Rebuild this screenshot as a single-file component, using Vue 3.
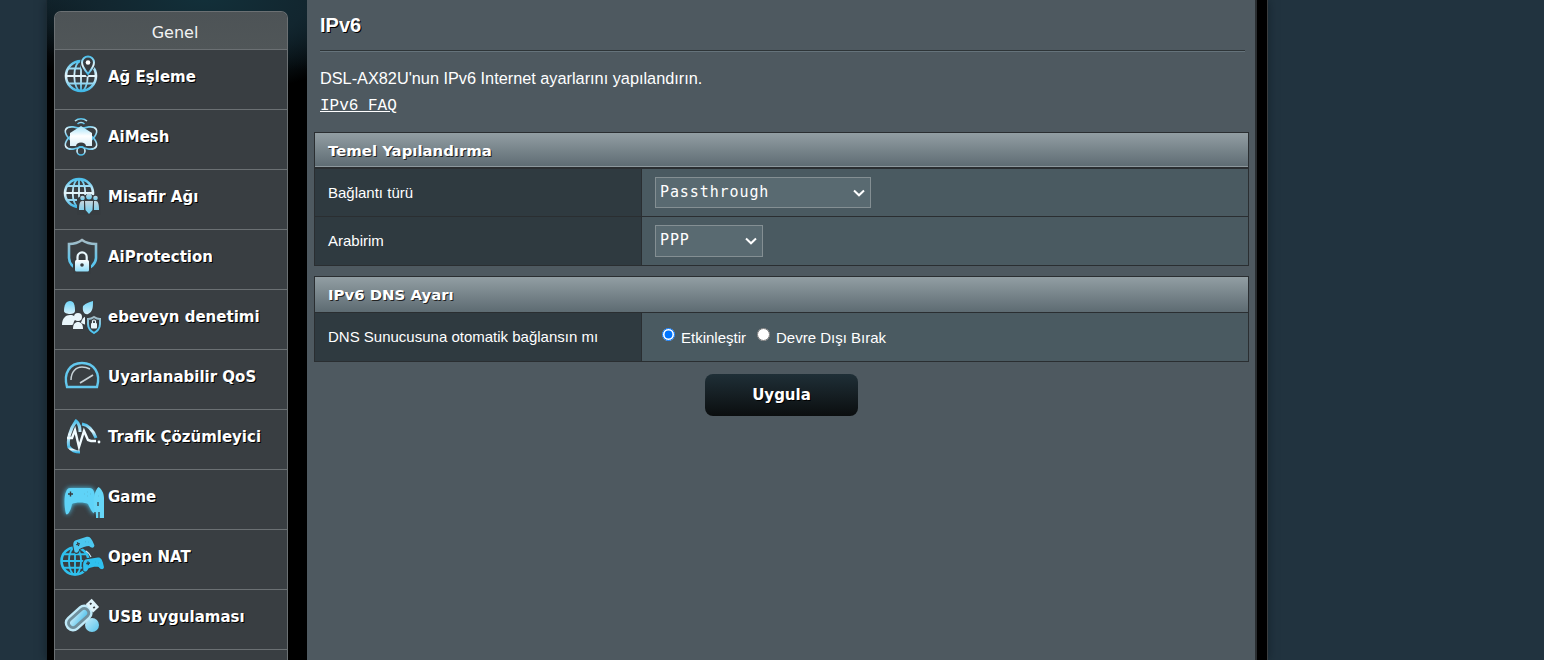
<script setup>
const globe = (cx, cy, r, stroke = 'url(#gv)') => `
  <g fill="none" stroke="${stroke}" stroke-width="1.800">
    <circle cx="${cx}" cy="${cy}" r="${r}" stroke-width="2.600"/>
    <ellipse cx="${cx}" cy="${cy}" rx="${r * 0.45}" ry="${r}"/>
    <path d="M${cx} ${cy - r}V${cy + r}M${cx - r} ${cy}H${cx + r}M${cx - r * 0.85} ${cy - r * 0.5}H${cx + r * 0.85}M${cx - r * 0.85} ${cy + r * 0.5}H${cx + r * 0.85}"/>
  </g>`

const pad = (x, y, s, rot, fill) => `
  <g transform="translate(${x} ${y}) rotate(${rot}) scale(${s})" >
    <path fill="${fill}" stroke="#373c40" stroke-width="2" paint-order="stroke" d="M-6 -6H6C9 -6 10 -3 10.500 0L11 5C10 8 7 7 5.500 4C2 3-2 3-5.500 4C-7 7-10 8-11 5L-10.500 0C-10 -3-9 -6-6 -6Z"/>
    <path stroke="#373c40" stroke-width="1.400" fill="none" d="M-7 -1.500H-3M-5 -3.500V.5M3 -1.500H3.100M6 0H6.100"/>
  </g>`

const menu = [
  {
    label: 'Ağ Eşleme',
    icon: globe(21, 22, 15) + `
      <path fill="#373c40" d="M27 23C22 16 20 13 20 9A8 8 0 0 1 36 9C36 13 32 17 27 23Z"/>
      <path fill="none" stroke="url(#gv)" stroke-width="2" d="M28 20C24 15 22 12 22 8.500A6 6 0 0 1 34 8.500C34 12 32 15 28 20Z"/>
      <circle cx="28" cy="8.500" r="2.300" fill="#fff"/>`
  },
  {
    label: 'AiMesh',
    icon: `
      <g fill="none" stroke="url(#gv)" stroke-width="1.600">
        <path d="M15 7A9 9 0 0 1 27 7M17.500 10A5 5 0 0 1 24.500 10"/>
        <ellipse cx="21" cy="24" rx="17.500" ry="8" transform="rotate(30 21 24)"/>
        <ellipse cx="21" cy="24" rx="17.500" ry="8" transform="rotate(-30 21 24)"/>
        <circle cx="21" cy="37" r="4"/>
      </g>
      <path fill="url(#gw)" d="M21 12L32 19V32H10V19Z"/>
      <path fill="#373c40" d="M16 32A5 3.500 0 0 1 26 32Z"/>`
  },
  {
    label: 'Misafir Ağı',
    icon: globe(19, 19, 14) + `
      <path fill="#373c40" d="M17 25C20 20 36 19 41 25V41H17Z"/>
      <g fill="url(#gp)">
        <circle cx="22.500" cy="24" r="2.300"/><circle cx="29" cy="22.500" r="2.900"/><circle cx="35.500" cy="24" r="2.300"/>
        <path d="M19 36C19 30 20 27 22 27H24V36ZM25 27H33L32.500 36L29 40L25.500 36ZM34 27H36C38 27 39 30 39 36H34Z"/>
      </g>`
  },
  {
    label: 'AiProtection',
    icon: `
      <path fill="none" stroke="url(#gs)" stroke-width="2.600" d="M22 6C26 9 32 10 36 10V24C36 31 29 35 22 38C15 35 9 31 9 24V10C13 10 18 9 22 6Z"/>
      <path fill="#373c40" d="M13 24H31V40H13Z"/>
      <path fill="none" stroke="#e9f8fe" stroke-width="2.200" d="M17.500 27V23A4.600 4.600 0 0 1 26.700 23V27"/>
      <rect x="15" y="26" width="14" height="11.500" rx="1.500" fill="url(#gl)"/>
      <circle cx="22" cy="31" r="1.800" fill="#373c40"/>`
  },
  {
    label: 'ebeveyn denetimi',
    icon: `
      <g fill="url(#gp2)">
        <path d="M4 17C4 11 6 7 10 7S15 11 15 17C15 19 13 20 10 20S4 19 4 17Z"/>
        <path d="M23 12C26 9 30 8 33 7C33 13 33 18 28 20C25 21 22 18 23 12Z"/>
      </g>
      <g fill="#e9f6fb">
        <path d="M2 31C2 24 6 21 10 21C14 21 16 23 15 26C13 28 14 31 12 31H4C3 31 2 31 2 31Z"/>
        <circle cx="18" cy="23" r="4"/>
        <path d="M13 35C13 30 15 28 18 28S23 30 23 35Z"/>
        <path d="M21 29C22 25 24 22 28 22L30 23C27 26 26 31 26 31Z"/>
      </g>
      <path fill="#373c40" d="M34 20C31 22 28 22 25 22V30C25 36 29 38 34 41C39 38 42 36 42 30V22C39 22 37 22 34 20Z"/>
      <path fill="none" stroke="url(#gs)" stroke-width="2" d="M34 23C32 24.500 30 25 28 25V30C28 35 31 37 34 39C37 37 40 35 40 30V25C38 25 36 24.500 34 23Z"/>
      <rect x="31" y="29" width="6" height="5.500" rx="1" fill="#e9f6fb"/>
      <path fill="none" stroke="#e9f6fb" stroke-width="1.200" d="M32.500 29V27.500A1.500 1.500 0 0 1 35.500 27.500V29"/>`
  },
  {
    label: 'Uyarlanabilir QoS',
    icon: `
      <path fill="none" stroke="#63c8ee" stroke-width="2.400" d="M7 33C3 19 10 9 22 9S41 19 37 33Z"/>
      <path fill="none" stroke="#c8d3d8" stroke-width="1.500" d="M11 26C11 18 16 13 22 13C25 13 28 14 30 15"/>
      <path stroke="#c8d3d8" stroke-width="1.700" d="M20 29L33 21"/>`
  },
  {
    label: 'Trafik Çözümleyici',
    icon: `
      <g fill="none" stroke="url(#gv)" stroke-width="3">
        <path d="M9 34C7 26 10 15 16 7C20 10 20 14 20 18"/>
        <path d="M22 10C28 11 33 16 36 24"/>
        <path d="M9 33C12 37 16 38 20 38"/>
      </g>
      <path fill="none" stroke="#f1fbff" stroke-width="2.400" d="M7 24H12L15 16L19 33L24 17L28 26L31 27H36"/>
      <circle cx="39" cy="28" r="1.400" fill="#f1fbff"/>`
  },
  {
    label: 'Game',
    icon: `
      <g filter="url(#glow)">
        <path fill="#4fcdf5" d="M10 14H30C33 14 35 18 35 24L36 39C33 41 31 36 28 30C25 28 15 28 12 30C11 36 8 42 6 40C4 33 4 21 6 18C7 15 8 14 10 14Z"/>
      </g>
      <path fill="#5fd3f7" d="M10 14H30C33 14 35 18 35 24L36 39C33 41 31 36 28 30C25 28 15 28 12 30C11 36 8 42 6 40C4 33 4 21 6 18C7 15 8 14 10 14Z"/>
      <path stroke="#373c40" stroke-width="1.400" fill="none" d="M8 20H13M10.500 17.500V22.500M24 20H24.100M27 18H27.100M27 22H27.100M30 20H30.100"/>
      <path fill="#66d6f7" d="M38.500 13C41.500 15 44 19 44 24V44H36V42L34 34C33 27 34 17 38.500 13Z"/>
      <path stroke="#373c40" stroke-width="1.300" fill="none" d="M38 22H38.100M38 28V32M35 38V44M39 38V44"/>`
  },
  {
    label: 'Open NAT',
    icon: globe(15, 27, 13.500, '#2fc0ee') + pad(23, 10, 0.95, -18, '#4cc8f0') + pad(33, 30, 0.95, -8, '#2fc0ee') + `
      <path fill="none" stroke="#c8e7f2" stroke-width="1.200" d="M26 17C29 19 30 20 31 23"/>`
  },
  {
    label: 'USB uygulaması',
    icon: `
      <circle cx="32" cy="31" r="7" fill="url(#gu)"/>
      <g transform="rotate(-42 22 21)">
        <rect x="3" y="14" width="29" height="14" rx="6.500" fill="#6f8f9c" stroke="#bfe9f8" stroke-width="2.400"/>
        <rect x="7" y="18" width="21" height="6" rx="3" fill="url(#gu)"/>
        <path d="M32 15.500H40V26.500H32Z" fill="#dff3fa"/>
        <path d="M35 18.500H37M35 23.500H37" stroke="#373c40" stroke-width="1.800"/>
      </g>`
  }
]

const forms = [
  {
    title: 'Temel Yapılandırma',
    thick: true,
    rows: [
      { label: 'Bağlantı türü', type: 'select', value: 'Passthrough', size: 'wide' },
      { label: 'Arabirim', type: 'select', value: 'PPP', size: 'narrow' }
    ]
  },
  {
    title: 'IPv6 DNS Ayarı',
    thick: false,
    rows: [{ label: 'DNS Sunucusuna otomatik bağlansın mı', type: 'radio' }]
  }
]
</script>

<template>
  <div class="page">
    <svg class="defs" width="0" height="0" aria-hidden="true">
      <defs>
        <linearGradient id="gv" x1="0" y1="0" x2="0" y2="1" gradientUnits="objectBoundingBox">
          <stop offset="0" stop-color="#4cc0ec" /><stop offset=".5" stop-color="#e8f6fb" /><stop offset="1" stop-color="#3fb8e8" />
        </linearGradient>
        <linearGradient id="gw" x1="0" y1="0" x2="0" y2="1">
          <stop offset="0" stop-color="#9fe0f8" /><stop offset=".5" stop-color="#ffffff" /><stop offset="1" stop-color="#d8eef7" />
        </linearGradient>
        <linearGradient id="gs" x1="0" y1="0" x2="0" y2="1">
          <stop offset="0" stop-color="#a5bcc6" /><stop offset=".6" stop-color="#63c6ec" /><stop offset="1" stop-color="#4cc3f0" />
        </linearGradient>
        <linearGradient id="gl" x1="0" y1="0" x2="0" y2="1">
          <stop offset="0" stop-color="#ffffff" /><stop offset="1" stop-color="#8edcf8" />
        </linearGradient>
        <linearGradient id="gp" x1="0" y1="0" x2="0" y2="1">
          <stop offset="0" stop-color="#c6d5dc" /><stop offset="1" stop-color="#66d0f5" />
        </linearGradient>
        <linearGradient id="gp2" x1="0" y1="0" x2="0" y2="1">
          <stop offset="0" stop-color="#6ed4f8" /><stop offset="1" stop-color="#d6f1fb" />
        </linearGradient>
        <linearGradient id="gu" x1="0" y1="0" x2="1" y2="1">
          <stop offset="0" stop-color="#bfe9f8" /><stop offset="1" stop-color="#58c4ec" />
        </linearGradient>
        <filter id="glow" x="-30%" y="-30%" width="160%" height="160%">
          <feGaussianBlur stdDeviation="2.500" />
        </filter>
      </defs>
    </svg>

    <div class="frame">
      <aside class="left">
        <nav class="sidebar">
          <div class="side-head">Genel</div>
          <a v-for="item in menu" :key="item.label" class="side-item">
            <svg class="side-icon" width="44" height="44" viewBox="0 0 44 44" v-html="item.icon"></svg>
            <span class="side-label">{{ item.label }}</span>
          </a>
          <a class="side-item"></a>
        </nav>
      </aside>

      <main class="main">
        <h1 class="title">IPv6</h1>
        <div class="rule"></div>
        <p class="desc">DSL-AX82U'nun IPv6 Internet ayarlarını yapılandırın.</p>
        <a class="faq">IPv6&nbsp;FAQ</a>

        <section v-for="form in forms" :key="form.title" class="form">
          <h2 class="form-head" :class="{ thick: form.thick }">{{ form.title }}</h2>
          <div v-for="row in form.rows" :key="row.label" class="form-row">
            <div class="cell-label">{{ row.label }}</div>
            <div class="cell-value">
              <div v-if="row.type === 'select'" class="select-wrap" :class="row.size">
                <select class="select">
                  <option>{{ row.value }}</option>
                </select>
                <svg class="chevron" width="12" height="8" viewBox="0 0 12 8">
                  <path d="M1 1.500L6 6.300L11 1.500" fill="none" stroke="#fff" stroke-width="2" />
                </svg>
              </div>
              <div v-else class="radios">
                <label class="radio"><input type="radio" name="dns" checked />Etkinleştir</label>
                <label class="radio"><input type="radio" name="dns" />Devre Dışı Bırak</label>
              </div>
            </div>
          </div>
        </section>

        <div class="actions">
          <button class="apply" type="button">Uygula</button>
        </div>
      </main>
    </div>
  </div>
</template>

<style>
html, body { margin: 0; background: #21333f; }
</style>

<style scoped>
.page {
  height: 660px;
  overflow: hidden;
  background: #21333f;
  padding-left: 46px;
  position: relative;
  box-sizing: border-box;
}
.defs { position: absolute; }
.frame {
  display: flex;
  width: 1222px;
  height: 660px;
  background: #000;
  border-left: 1px solid #1c2a33;
  border-right: 1px solid #3a3d3f;
  box-sizing: border-box;
  box-shadow: 0 0 9px rgba(10, 20, 28, .55);
}
.left {
  width: 260px;
  flex: none;
  padding: 11px 0 0 7px;
  box-sizing: border-box;
  background:
    radial-gradient(ellipse 190px 100px at 60% -5px, #12303a 0%, #12262f 55%, rgba(0, 0, 0, 0) 100%),
    linear-gradient(180deg, #0f1f27 0, #000 70px);
}
.sidebar {
  width: 234px;
  box-sizing: border-box;
  border: 1px solid #6b7073;
  border-bottom: 0;
  border-radius: 7px 7px 0 0;
  background: #393e42;
}
.side-head {
  height: 37px;
  box-sizing: border-box;
  padding-left: 8px;
  text-align: center;
  color: #f2f2f2;
  font: 16px/41px "DejaVu Sans", sans-serif;
  background: linear-gradient(180deg, #4d5356, #505658);
  border-radius: 6px 6px 0 0;
}
.side-item {
  display: flex;
  height: 59px;
  border-top: 1px solid #6b7073;
  padding-left: 5px;
  gap: 4px;
  align-items: flex-start;
}
.side-icon { margin-top: 4px; flex: none; overflow: hidden; filter: blur(.35px); }
.side-label {
  color: #fff;
  font: bold 15px/20px "DejaVu Sans", sans-serif;
  text-shadow: 1px 1px 0 #000;
  margin-top: 17px;
  white-space: nowrap;
}
.main {
  width: 950px;
  flex: none;
  box-sizing: border-box;
  padding: 0 6px 0 7px;
  background: #4e5960;
  border-right: 2px solid #2a2e31;
  color: #fff;
  font-family: "Liberation Sans", Arial, sans-serif;
}
.title {
  margin: 0 0 0 6px;
  height: 50px;
  box-sizing: border-box;
  padding-top: 13px;
  font: bold 20px/24px "Liberation Sans", Arial, sans-serif;
  text-shadow: 1px 1px 0 #000;
}
.rule {
  margin: 0 4px 0 6px;
  height: 1px;
  background: #2e3538;
  border-bottom: 1px solid #65737b;
}
.desc {
  margin: 0 0 0 6px;
  padding-top: 16px;
  font-size: 16.300px;
  line-height: 20px;
  color: #fff;
}
.faq {
  display: block;
  margin: 11px 0 18px 6px;
  height: 15px;
  line-height: 15px;
  font-family: "Liberation Mono", monospace;
  font-size: 16px;
  text-decoration: underline;
  color: #fff;
}
.form {
  border: 1px solid #2a2e31;
  margin-bottom: 10px;
}
.form-head {
  margin: 0;
  height: 36px;
  box-sizing: border-box;
  padding-left: 13px;
  font: bold 14.900px/36px "DejaVu Sans", sans-serif;
  color: #fff;
  text-shadow: 1px 1px 0 #222;
  background: linear-gradient(180deg, #929ea3, #5d6b72);
  border-bottom: 1px solid #2a2e31;
}
.form-head.thick {
  border-bottom-width: 2px;
  box-shadow: inset 0 -1px 0 #8d989d;
}
.form-row {
  display: grid;
  grid-template-columns: 327px 1fr;
  height: 48px;
  box-sizing: border-box;
  background: #4a5a61;
}
.form-row:not(:last-child) { border-bottom: 1px solid #2a2e31; }
.cell-label {
  display: flex;
  align-items: center;
  background: #2f3a40;
  border-right: 1px solid #2a2e31;
  padding-left: 13px;
  font-size: 15px;
  line-height: 18px;
}
.cell-value {
  padding-left: 13px;
  display: flex;
  align-items: center;
}
.select-wrap { position: relative; display: block; }
.select-wrap.wide { width: 216px; height: 31px; }
.select-wrap.narrow { width: 108px; height: 32px; }
.select {
  appearance: none;
  width: 100%;
  height: 100%;
  margin: 0;
  padding: 0 0 2px 4px;
  box-sizing: border-box;
  border: 1px solid #848f93;
  border-radius: 0;
  background: #596a71;
  color: #fff;
  font-family: "DejaVu Sans Mono", monospace;
  font-size: 15px;
  letter-spacing: .9px;
}
.chevron {
  position: absolute;
  right: 6px;
  top: 12px;
  pointer-events: none;
}
.radios {
  display: flex;
  align-items: center;
  gap: 11px;
  padding-left: 7px;
  font-size: 15px;
}
.radio { display: flex; align-items: flex-start; line-height: 18px; padding-top: 1px; }
.radio input {
  margin: -1px 6px 0 0;
  width: 13px;
  height: 13px;
}
.actions {
  display: flex;
  justify-content: center;
  padding-top: 2px;
}
.apply {
  width: 153px;
  height: 42px;
  border: 0;
  border-radius: 8px;
  background: linear-gradient(180deg, #1f2f37, #0b0e0f);
  color: #fff;
  font: bold 15px "DejaVu Sans", sans-serif;
  text-shadow: 1px 1px 0 #000;
}
</style>
